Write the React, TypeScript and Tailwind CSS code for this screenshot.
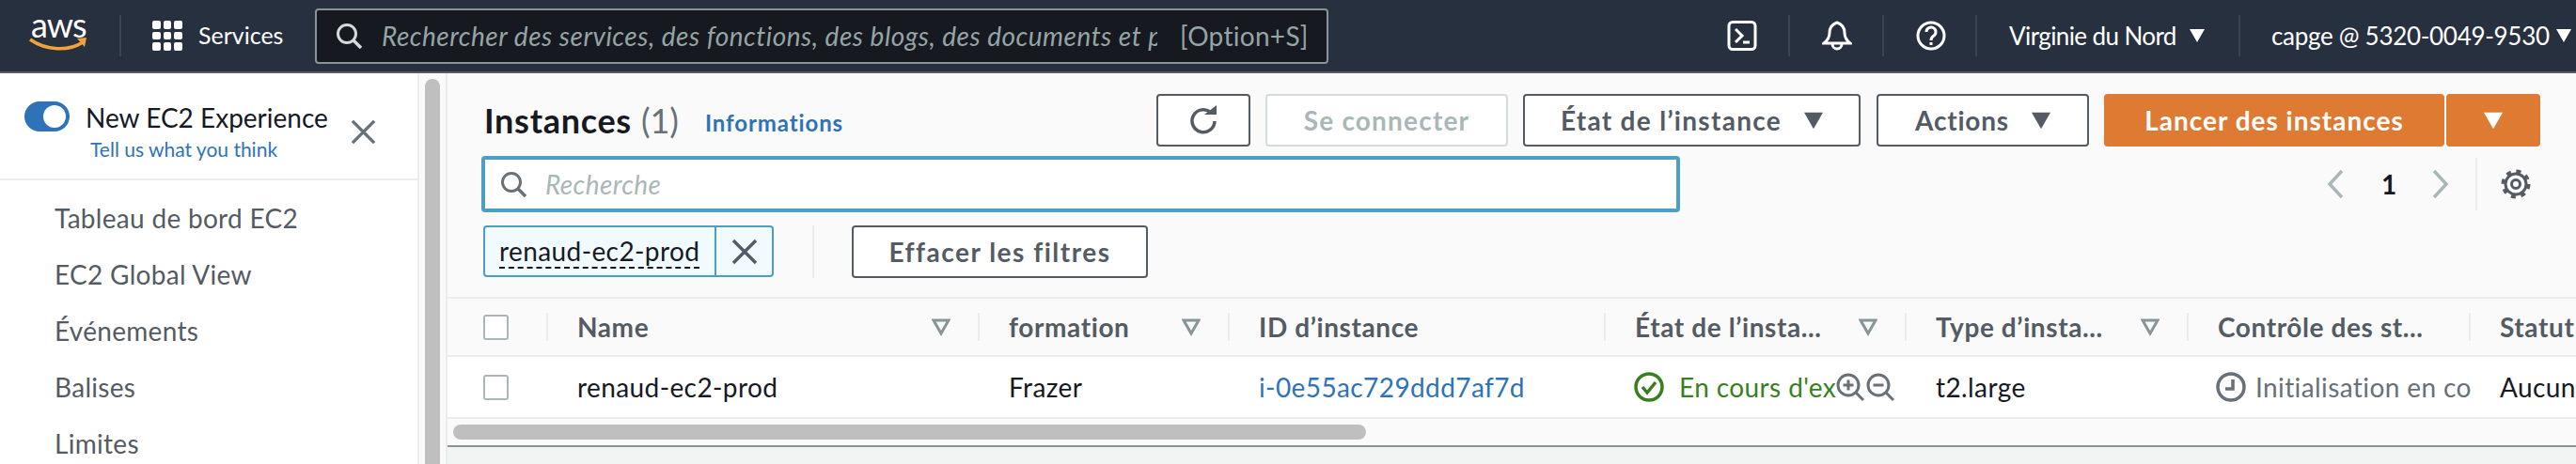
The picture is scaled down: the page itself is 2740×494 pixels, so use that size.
// AWS EC2 instances console, cropped header and table
const Caret = ({ className }: { className: string }) => (
  <svg viewBox="0 0 16 14" className={className}>
    <path d="M0 0h16L8 14z" fill="currentColor" />
  </svg>
);

const FilterIcon = () => (
  <svg viewBox="0 0 20 20" className="w-5 h-5 text-[#879596] shrink-0">
    <path d="M2 3h16l-8 14z" fill="none" stroke="currentColor" strokeWidth="3" />
  </svg>
);

const Search = ({ className }: { className: string }) => (
  <svg viewBox="0 0 28 28" className={className} fill="none" stroke="currentColor" strokeWidth="3">
    <circle cx="12" cy="12" r="9.5" />
    <path d="M19 19l8 8" strokeWidth="3.5" />
  </svg>
);

const Close = ({ className }: { className: string }) => (
  <svg viewBox="0 0 28 28" className={className} fill="none" stroke="currentColor" strokeWidth="3.5">
    <path d="M2 2l24 24M26 2L2 26" />
  </svg>
);

const Checkbox = () => <div className="w-[27px] h-[27px] rounded-[3px] border-2 border-[#aab7b8] bg-white" />;

const Divider = () => <div className="w-0.5 h-11 bg-[#3a4554] shrink-0" />;

const HeadCell = ({ label, width, filter }: { label: string; width: string; filter?: boolean }) => (
  <div className={`${width} shrink-0 h-[30px] flex items-center justify-between pl-[31px] pr-[29px] border-r-2 border-[#eaeded]`}>
    <span className="whitespace-nowrap tracking-[0.6px]">{label}</span>
    {filter && <FilterIcon />}
  </div>
);

const navItems = ["Tableau de bord EC2", "EC2 Global View", "Événements", "Balises", "Limites"];

const Sidebar = () => (
  <aside className="w-[446px] shrink-0 bg-white border-r-2 border-[#eaeded]">
    <div className="h-[114px] border-b-2 border-[#eaeded] pl-[26px] pt-[30px] flex">
      <div className="w-12 h-8 rounded-full bg-[#2e73b8] flex items-center justify-end pr-1 shrink-0">
        <div className="w-6 h-6 rounded-full bg-white" />
      </div>
      <div className="ml-[17px] w-[282px] shrink-0">
        <div className="text-[28px] leading-[34px] text-[#16191f] whitespace-nowrap">New EC2 Experience</div>
        <div className="ml-[5px] mt-[4px] text-[21px] leading-[26px] text-[#2e73b8]">Tell us what you think</div>
      </div>
      <Close className="w-[27px] h-[27px] mt-[19px] text-[#687078]" />
    </div>
    <nav className="pl-[58px] pt-[10px] text-[28px] leading-[60px] tracking-[0.3px] text-[#545b64]">
      {navItems.map((item) => (
        <div key={item}>{item}</div>
      ))}
    </nav>
  </aside>
);

const Header = () => (
  <header className="h-[78px] bg-[#27303f] border-b-2 border-[#545b64] flex items-center text-white">
    <div className="w-[127px] shrink-0 pl-[31px] flex flex-col items-start">
      <span className="text-[36px] leading-[26px] tracking-[-1px] -mt-[8px] pl-[2px]">aws</span>
      <svg viewBox="0 0 62 16" className="w-[62px] h-4">
        <path d="M1 3c17 12 41 13 56 3" fill="none" stroke="#f0a33a" strokeWidth="3.5" />
        <path d="M51 2l10-1-2 10z" fill="#f0a33a" />
      </svg>
    </div>
    <Divider />
    <div className="ml-[33px] w-8 h-8 grid grid-cols-3 gap-[3px] shrink-0">
      {Array.from({ length: 9 }).map((_, i) => (
        <div key={i} className="bg-white rounded-[2px]" />
      ))}
    </div>
    <span className="ml-[17px] w-[88px] shrink-0 text-[25px] whitespace-nowrap">Services</span>
    <div className="ml-[36px] w-[1078px] h-[59px] shrink-0 bg-[#16191f] border-2 border-[#879596] rounded-[4px] flex items-center pl-5 text-[28px] text-[#95a5a6]">
      <Search className="w-7 h-7 shrink-0 text-[#d5dbdb]" />
      <div className="ml-[21px] w-[825px] overflow-hidden whitespace-nowrap italic tracking-[0.5px] shrink-0">
        Rechercher des services, des fonctions, des blogs, des documents et plus encore
      </div>
      <span className="ml-6 whitespace-nowrap tracking-[0.3px]">[Option+S]</span>
    </div>
    <svg viewBox="0 0 32 32" className="ml-[424px] w-8 h-8 shrink-0" fill="none" stroke="currentColor" strokeWidth="3">
      <rect x="2" y="1.5" width="28" height="29" rx="4" />
      <path d="M9 9l7 7-7 7M17 23h7" />
    </svg>
    <div className="ml-[33px]"><Divider /></div>
    <svg viewBox="0 0 32 32" className="ml-[34px] w-8 h-8 shrink-0" fill="none" stroke="currentColor" strokeWidth="3">
      <path d="M16 2c-6 2-8 6-8 11 0 5-2 8-6 11h28c-4-3-6-6-6-11 0-5-2-9-8-11z" />
      <path d="M11 25a5 5 0 0010 0" />
    </svg>
    <div className="ml-[32px]"><Divider /></div>
    <svg viewBox="0 0 32 32" className="ml-[34px] w-8 h-8 shrink-0" fill="none" stroke="currentColor" strokeWidth="3">
      <circle cx="16" cy="16" r="14" />
      <path d="M11 12a5 5 0 1 1 8 4c-2 1.500-3 2-3 5" />
      <path d="M16 23v3" />
    </svg>
    <div className="ml-[31px]"><Divider /></div>
    <span className="ml-[34px] text-[26px] tracking-[-0.6px] w-[180px] shrink-0 whitespace-nowrap">Virginie du Nord</span>
    <Caret className="ml-[12px] w-4 h-3.5 shrink-0" />
    <div className="ml-[36px]"><Divider /></div>
    <span className="ml-[33px] text-[26px] tracking-[-0.3px] w-[290px] shrink-0 whitespace-nowrap">capge @ 5320-0049-9530</span>
    <Caret className="ml-[13px] w-4 h-3.5 shrink-0" />
  </header>
);

const Toolbar = () => (
  <div className="flex h-14 items-stretch font-bold text-[28px] text-[#545b64]">
    <div className="w-[718px] shrink-0 flex items-center">
      <span className="ml-[3px] text-[36px] tracking-[0.7px] text-[#16191f]">Instances</span>
      <span className="ml-[10px] text-[36px] font-normal text-[#687078]">(1)</span>
      <span className="ml-[28px] mt-[6px] text-[24px] tracking-[0.9px] text-[#2e73b8]">Informations</span>
    </div>
    <button className="w-[100px] border-2 border-[#545b64] rounded-[4px] bg-white flex items-center justify-center">
      <svg viewBox="0 0 32 32" className="w-8 h-8" fill="none" stroke="currentColor" strokeWidth="3.5">
        <path d="M23 7a12 12 0 1 0 5 10" />
        <path d="M17 10h13V0z" fill="currentColor" stroke="none" />
      </svg>
    </button>
    <button className="ml-4 w-[258px] border-2 border-[#d5dbdb] rounded-[4px] bg-white tracking-[1.2px] text-[#aab7b8]">Se connecter</button>
    <button className="ml-4 w-[359px] border-2 border-[#545b64] rounded-[4px] bg-white tracking-[1.3px] flex items-center justify-center gap-6">
      État de l’instance
      <Caret className="w-5 h-[19px]" />
    </button>
    <button className="ml-[17px] w-[226px] border-2 border-[#545b64] rounded-[4px] bg-white tracking-[0.8px] flex items-center justify-center gap-6">
      Actions
      <Caret className="w-5 h-[19px]" />
    </button>
    <button className="ml-4 w-[362px] rounded-[4px] bg-[#df7a33] tracking-[1px] text-white">Lancer des instances</button>
    <button className="ml-0.5 w-[100px] rounded-[4px] bg-[#df7a33] text-white flex items-center justify-center">
      <Caret className="w-5 h-[19px]" />
    </button>
  </div>
);

const Filters = () => (
  <>
    <div className="mt-[10px] flex items-center h-[60px]">
      <div className="w-[1275px] h-[60px] shrink-0 bg-white border-4 border-[#4a9fc5] rounded-[4px] flex items-center pl-4 text-[#687078]">
        <Search className="w-7 h-7" />
        <span className="ml-5 text-[28px] tracking-[0.4px] italic text-[#aab7b8]">Recherche</span>
      </div>
      <svg viewBox="0 0 18 30" className="ml-[688px] w-[18px] h-[30px] text-[#aab7b8] shrink-0" fill="none" stroke="currentColor" strokeWidth="3.5">
        <path d="M16 1L3 15l13 14" />
      </svg>
      <span className="ml-10 w-[14px] font-bold text-[28px] text-[#16191f]">1</span>
      <svg viewBox="0 0 18 30" className="ml-10 w-[18px] h-[30px] text-[#aab7b8] shrink-0" fill="none" stroke="currentColor" strokeWidth="3.5">
        <path d="M2 1l13 14L2 29" />
      </svg>
      <div className="ml-7 w-0.5 h-14 bg-[#eaeded] shrink-0" />
      <svg viewBox="0 0 32 32" className="ml-[25px] w-8 h-8 text-[#545b64] shrink-0" fill="none" stroke="currentColor">
        <circle cx="16" cy="16" r="11" strokeWidth="3" />
        <circle cx="16" cy="16" r="4.500" strokeWidth="3" />
        <circle cx="16" cy="16" r="13.500" strokeWidth="4" strokeDasharray="5 5.600" />
      </svg>
    </div>
    <div className="mt-[14px] flex h-14">
      <div className="ml-0.5 w-[309px] shrink-0 h-[55px] bg-[#f1faff] border-2 border-[#4a9fc5] rounded-[4px] flex">
        <div className="w-[246px] shrink-0 pl-[15px] flex items-center border-r-2 border-[#4a9fc5]">
          <span className="text-[28px] leading-[34px] tracking-[0.4px] text-[#16191f] border-b-2 border-dashed border-[#16191f] whitespace-nowrap">renaud-ec2-prod</span>
        </div>
        <div className="flex-1 flex items-center justify-center">
          <Close className="w-7 h-7 text-[#545b64]" />
        </div>
      </div>
      <div className="ml-[41px] w-0.5 h-14 bg-[#eaeded] shrink-0" />
      <button className="ml-10 w-[315px] h-14 border-2 border-[#545b64] rounded-[4px] bg-white font-bold text-[28px] tracking-[1.5px] text-[#545b64]">Effacer les filtres</button>
    </div>
  </>
);

const Table = () => (
  <div className="mt-5 border-t-2 border-b-2 border-t-[#eaeded] border-b-[#879596] bg-[#fafafa] overflow-hidden">
    <div className="h-[60px] flex items-center font-bold text-[28px] text-[#545b64]">
      <div className="w-[107px] shrink-0 h-[30px] pl-[38px] flex items-center border-r-2 border-[#eaeded]">
        <Checkbox />
      </div>
      <HeadCell label="Name" width="w-[459px]" filter />
      <HeadCell label="formation" width="w-[266px]" filter />
      <HeadCell label="ID d’instance" width="w-[400px]" />
      <HeadCell label="État de l’insta..." width="w-[320px]" filter />
      <HeadCell label="Type d’insta..." width="w-[300px]" filter />
      <HeadCell label="Contrôle des st..." width="w-[300px]" />
      <div className="pl-[31px] tracking-[0.6px] whitespace-nowrap">Statut</div>
    </div>
    <div className="h-[68px] flex items-center bg-white border-y-2 border-[#eaeded] text-[28px] tracking-[0.4px] text-[#16191f] whitespace-nowrap">
      <div className="w-[107px] shrink-0 pl-[38px]">
        <Checkbox />
      </div>
      <div className="w-[459px] shrink-0 pl-[31px]">renaud-ec2-prod</div>
      <div className="w-[266px] shrink-0 pl-[31px]">Frazer</div>
      <div className="w-[400px] shrink-0 pl-[31px] text-[#2e73b8]">i-0e55ac729ddd7af7d</div>
      <div className="w-[320px] shrink-0 pl-[30px] flex items-center text-[#3a7f1f]">
        <svg viewBox="0 0 32 32" className="w-8 h-8 shrink-0" fill="none" stroke="currentColor" strokeWidth="3.5">
          <circle cx="16" cy="16" r="14" />
          <path d="M9 16l5 6 9-11" />
        </svg>
        <span className="ml-4 w-[167px] overflow-hidden shrink-0">En cours d'exécution</span>
        <div className="flex shrink-0 text-[#687078]">
          <svg viewBox="0 0 30 30" className="w-[30px] h-[30px]" fill="none" stroke="currentColor" strokeWidth="3">
            <circle cx="13" cy="13" r="11" />
            <path d="M21 21l8 8M7.500 13h11M13 7.500v11" />
          </svg>
          <svg viewBox="0 0 30 30" className="ml-0.5 w-[30px] h-[30px]" fill="none" stroke="currentColor" strokeWidth="3">
            <circle cx="13" cy="13" r="11" />
            <path d="M21 21l8 8M7.500 13h11" />
          </svg>
        </div>
      </div>
      <div className="w-[300px] shrink-0 pl-[31px]">t2.large</div>
      <div className="w-[300px] shrink-0 pl-[29px] flex items-center text-[#687078]">
        <svg viewBox="0 0 32 32" className="w-8 h-8 shrink-0" fill="none" stroke="currentColor" strokeWidth="3.5">
          <circle cx="16" cy="16" r="14" />
          <path d="M18 8v10h-8" />
        </svg>
        <span className="ml-2.5 w-[229px] overflow-hidden shrink-0">Initialisation en cours</span>
      </div>
      <div className="pl-[31px]">Aucune</div>
    </div>
    <div className="h-7 flex items-center pl-1.5">
      <div className="w-[971px] h-4 rounded-full bg-[#bfbfbf]" />
    </div>
  </div>
);

export default function App() {
  return (
    <div className="w-[2740px] h-[494px] overflow-hidden font-['Lato','Liberation_Sans',sans-serif] bg-[#f2f3f3]">
      <Header />
      <div className="flex h-[416px]">
        <Sidebar />
        <div className="w-7 shrink-0 bg-[#fafafa] pl-1.5 pt-1.5">
          <div className="w-4 h-full rounded-t-full bg-[#bfbfbf]" />
        </div>
        <main className="flex-1 min-w-0 border-l-2 border-[#eaeded]">
          <div className="bg-[#fafafa] pt-[22px]">
            <div className="pl-9">
              <Toolbar />
              <Filters />
            </div>
            <Table />
          </div>
        </main>
      </div>
    </div>
  );
}
